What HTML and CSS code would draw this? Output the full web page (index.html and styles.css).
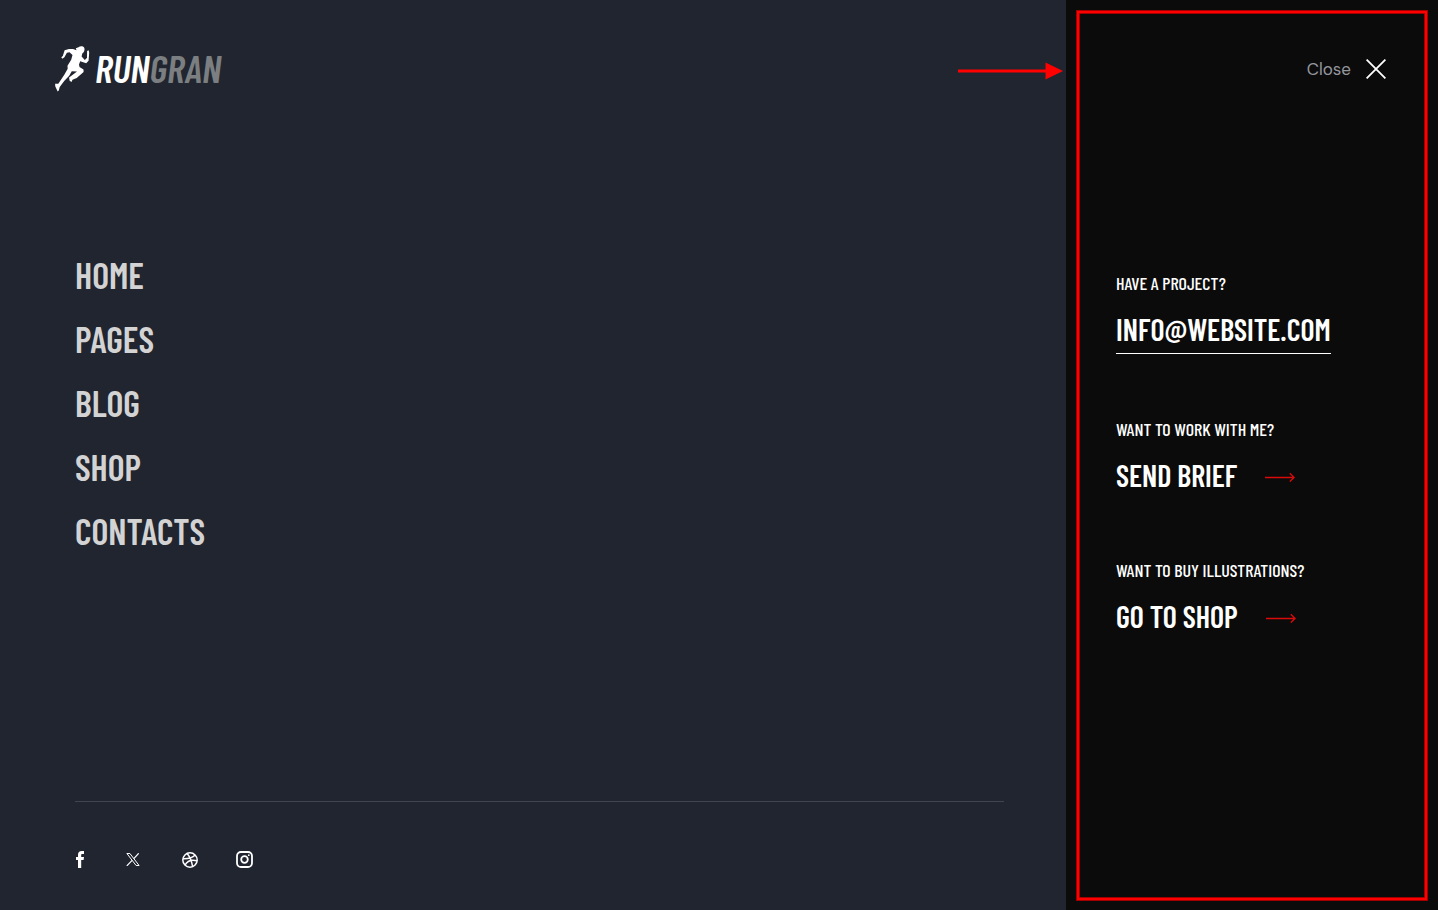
FILE: index.html
```html
<!DOCTYPE html>
<html lang="en">
<head>
<meta charset="utf-8">
<meta name="viewport" content="width=device-width, initial-scale=1">
<title>Rungran</title>
<link rel="stylesheet" href="styles.css">
</head>
<body>
<div class="page">
  <main class="main">
    <header class="header">
      <a class="logo" href="#" aria-label="Rungran">
        <svg class="runner" viewBox="0 0 36 48" aria-hidden="true">
          <path d="M24.500 3.300 C26 1.800 29.800 1.900 30.400 4.200 C30.900 6.300 30 8.500 28.300 9.400 L27.600 12.500 L30.800 16 L33 13.800 L33.100 7 L34.600 6.300 L35.200 8.500 L34.600 16.800 L32.200 19.200 L26.200 17.200 L25 20.500 L25.500 23 L29.500 25.500 L29.600 28 L22.700 34 L18.500 35.800 L17.500 37.900 L15.600 36.700 L15.100 33.500 L23 27.500 L17.800 27.200 L15.200 31.700 L10.200 36.900 L5.700 42.900 L4.800 46.400 L3.700 47.600 L1.300 42.500 L1.100 39.800 L4.300 39.700 L10.300 30.800 L13.700 24.700 L13.500 21.700 L17.200 15.700 L18.500 11 L15.500 8.200 L12.900 8.800 L10.400 13.200 L8.300 14.800 L7.300 13.200 L8.800 12 L10.600 6.300 L15 5.100 L19 4.900 L22.500 6.300 L21.800 4.200 Z"/>
        </svg>
        <span class="wordmark">RUN<span class="wordmark-dim">GRAN</span></span>
      </a>
    </header>
    <nav class="nav" aria-label="Main">
      <a href="#">HOME</a>
      <a href="#">PAGES</a>
      <a href="#">BLOG</a>
      <a href="#">SHOP</a>
      <a href="#">CONTACTS</a>
    </nav>
    <footer class="footer">
      <a class="social" href="#" aria-label="Facebook"><svg width="8" height="17" viewBox="0 0 8 17"><path fill="#fff" d="M2 17V9H0V6h2V4c0-2.700 1.300-4 3.800-4H8v3H6.500C5.400 3 5.200 3.400 5.200 4.300V6H8l-.4 3H5.200v8z"/></svg></a>
      <a class="social" href="#" aria-label="X"><svg width="17" height="13" viewBox="0 0 17 13"><path fill="none" stroke="#fff" d="M.9.500h3L13.100 12.500h-3z"/><path stroke="#fff" stroke-width="1.200" d="M12.700.300 7.800 5.700M6.100 7.300.800 12.900"/></svg></a>
      <a class="social" href="#" aria-label="Dribbble"><svg width="16" height="16" viewBox="0 0 16 16"><g fill="none" stroke="#fff" stroke-width="1.500"><circle cx="8" cy="8" r="7.200"/><path d="M5.200 1.500C8 5 9.700 9 10.600 14.500M.9 6.700C6 6.900 10.500 5.700 13.200 3M3 13.200C5.300 8.800 9.800 7.300 15.100 8.800"/></g></svg></a>
      <a class="social" href="#" aria-label="Instagram"><svg width="17" height="17" viewBox="0 0 17 17"><g fill="none" stroke="#fff" stroke-width="1.800"><rect x="1" y="1" width="15" height="15" rx="4"/><circle cx="8.500" cy="8.500" r="3.300"/></g><circle cx="12.800" cy="4.200" r=".9" fill="#fff"/></svg></a>
    </footer>
    <svg class="pointer" width="105" height="18" viewBox="0 0 105 18" aria-hidden="true"><path stroke="#f00" stroke-width="3" d="M0 9h90"/><path fill="#f00" d="M87.500.500 105 9 87.500 17.500z"/></svg>
  </main>
  <aside class="side">
    <button class="close" type="button">Close
      <svg width="20" height="20" viewBox="0 0 20 20" aria-hidden="true"><path stroke="#fff" stroke-width="1.800" d="M.6.600l18.800 18.800M19.400.600.600 19.400"/></svg>
    </button>
    <div class="blocks">
      <section class="block">
        <h2>HAVE A PROJECT?</h2>
        <a class="cta mail" href="mailto:info@website.com">INFO@WEBSITE.COM</a>
      </section>
      <section class="block">
        <h2>WANT TO WORK WITH ME?</h2>
        <a class="cta" href="#">SEND BRIEF
          <svg class="arrow" width="30" height="10" viewBox="0 0 30 10" aria-hidden="true"><path d="M0 5.500h29M24.800 1.200l4.300 4.300-4.300 4.100"/></svg></a>
      </section>
      <section class="block">
        <h2>WANT TO BUY ILLUSTRATIONS?</h2>
        <a class="cta" href="#">GO TO SHOP
          <svg class="arrow" width="30" height="10" viewBox="0 0 30 10" aria-hidden="true"><path d="M0 5.500h29M24.800 1.200l4.300 4.300-4.300 4.100"/></svg></a>
      </section>
    </div>
    <div class="frame"></div>
  </aside>
</div>
</body>
</html>
```
FILE: styles.css
```css
* { box-sizing: border-box; }
body {
  margin: 0;
  background: #21252f;
  color: #fff;
  font-family: "Barlow Condensed", "Roboto Condensed", "Open Sans", sans-serif;
  font-weight: 600;
}
a { color: inherit; text-decoration: none; }
svg { display: block; flex: none; }
.page {
  display: grid;
  grid-template-columns: 1fr 372px;
  min-height: 100vh;
}
.main {
  position: relative;
  display: flex;
  flex-direction: column;
  padding: 44px 62px 0 75px;
}
.header { display: flex; margin-left: -21px; }
.logo { display: flex; align-items: center; gap: 5px; }
.runner { width: 36px; height: 48px; fill: #fff; }
.wordmark {
  font-size: 39px;
  line-height: 48px;
  font-style: italic;
}
.wordmark-dim { color: #7b7f81; }
.nav {
  display: flex;
  flex-direction: column;
  align-items: flex-start;
  gap: 16px;
  margin-top: 159px;
  color: #d3d3d4;
  font-size: 36px;
  line-height: 48px;
}
.footer {
  display: flex;
  align-items: center;
  gap: 38px;
  height: 109px;
  padding-top: 7px;
  margin-top: auto;
  border-top: 1px solid #41454d;
}
.social { display: flex; justify-content: center; width: 17px; }
.social:first-child { margin-left: -4px; }
.pointer { position: absolute; right: 3px; top: 62px; }
.side {
  position: relative;
  padding: 54px 52px 54px 50px;
  background: #0b0b0b;
}
.close {
  display: flex;
  align-items: center;
  gap: 15px;
  margin-left: auto;
  padding: 0;
  border: 0;
  background: none;
  color: #94969e;
  font: 400 17px/30px "DM Sans", Inter, sans-serif;
  cursor: pointer;
}
.blocks { display: flex; flex-direction: column; gap: 65px; margin-top: 189px; }
.block { display: flex; flex-direction: column; align-items: flex-start; gap: 16px; }
.block h2 { margin: 0; font-size: 18px; line-height: 20px; font-weight: 500; }
.cta {
  display: flex;
  align-items: center;
  gap: 28px;
  font-size: 30px;
  line-height: 40px;
}
.mail { padding-bottom: 4px; border-bottom: 1px solid #fff; }
.arrow { margin-top: 3px; fill: none; stroke: #d90a0a; stroke-width: 1.4; }
.frame {
  position: absolute;
  inset: 11px 11px 10px;
  border: 2px solid #f00;
  box-shadow: 0 0 0 1px #a00000, inset 0 0 0 1px #a00000;
  pointer-events: none;
}
```
